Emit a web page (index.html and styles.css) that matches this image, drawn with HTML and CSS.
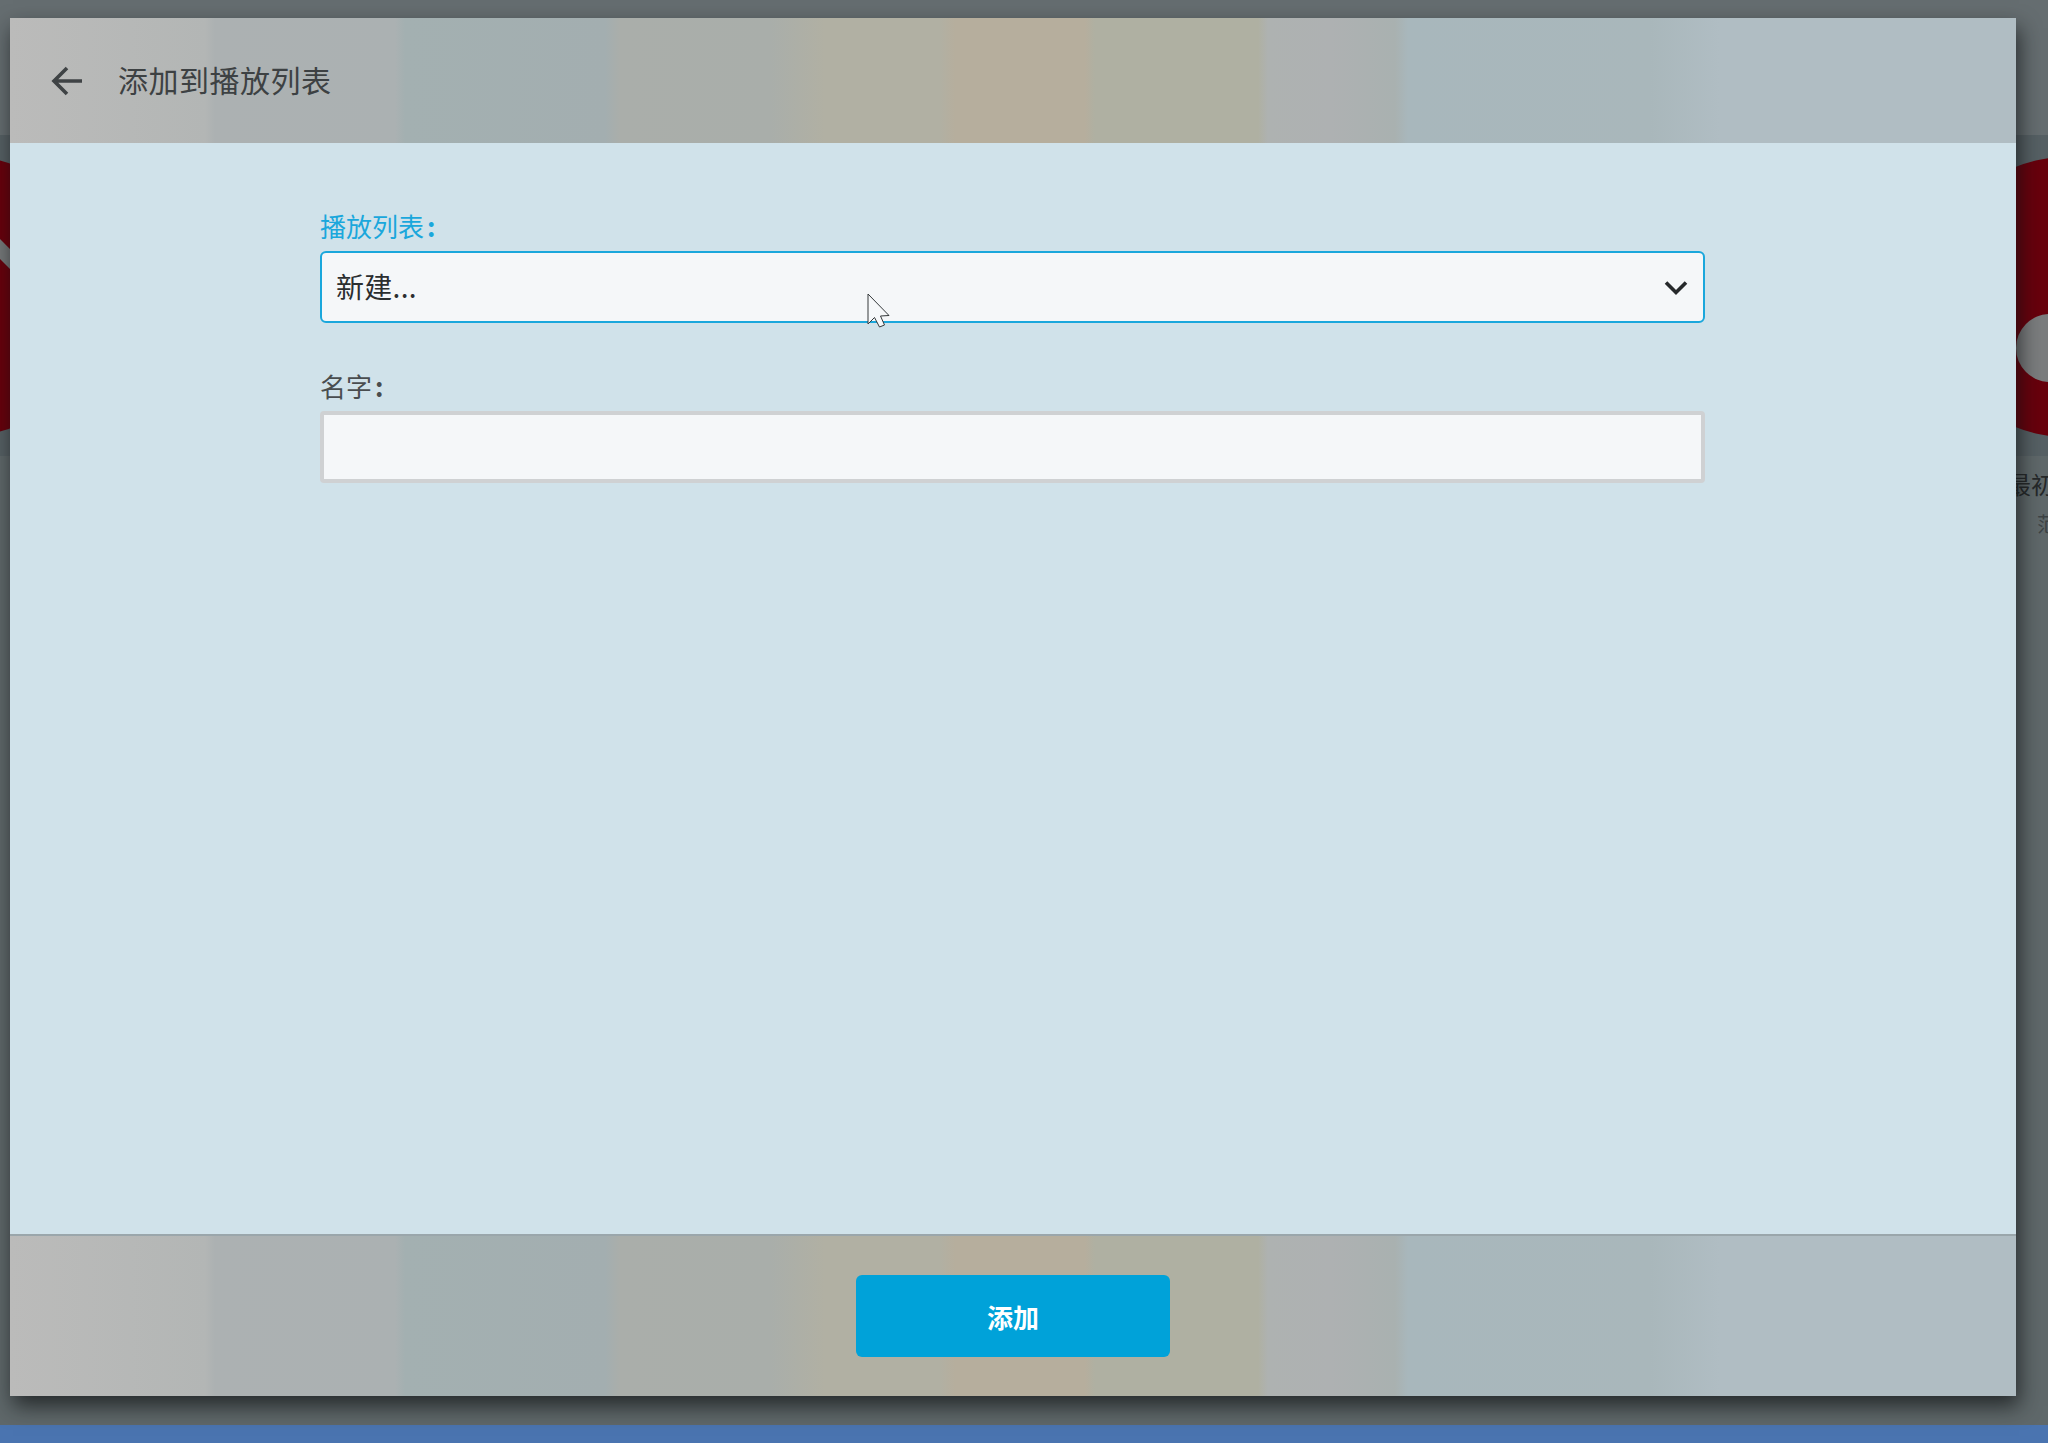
FILE: index.html
```html
<!DOCTYPE html>
<html lang="zh-CN">
<head>
<meta charset="utf-8">
<title>添加到播放列表</title>
<link rel="stylesheet" href="styles.css">
</head>
<body>
<div class="backdrop">
  <div class="top-band"></div>
  <div class="thumb-band"></div>
  <div class="disc disc-left"><span class="stripe"></span></div>
  <div class="disc disc-right"><span class="hole"></span></div>
  <div class="peek peek-title">最初</div>
  <div class="peek peek-sub">范</div>
  <div class="taskbar"></div>
</div>
<section class="dialog">
  <header class="dialog-head">
    <svg class="back" viewBox="0 0 32 30" width="32" height="30" aria-hidden="true"><path d="M31 15H3.500M16 2 3 15 16 28" fill="none" stroke="#3f4345" stroke-width="3.600"/></svg>
    <h1 class="dialog-title">添加到播放列表</h1>
  </header>
  <main class="dialog-body">
    <form class="form">
      <div class="field">
        <label class="label label-active">播放列表<span class="colon">:</span></label>
        <div class="select">
          <span class="select-value">新建...</span>
          <svg class="chev" viewBox="0 0 24 16" width="24" height="16" aria-hidden="true"><path d="M2 2.500 12 12.500 22 2.500" fill="none" stroke="#26292b" stroke-width="3.600"/></svg>
        </div>
      </div>
      <div class="field field-name">
        <label class="label">名字<span class="colon">:</span></label>
        <div class="input"></div>
      </div>
    </form>
  </main>
  <footer class="dialog-foot">
    <button class="add" type="button">添加</button>
  </footer>
</section>
<svg class="cursor" viewBox="0 0 24 36" width="24" height="36" aria-hidden="true"><path d="M1 1V31L7.500 24.500 12.500 34 17.500 32 13.500 23 22 22.500Z" fill="#f6f8fa" stroke="#34383a" stroke-width="1"/></svg>
</body>
</html>
```
FILE: styles.css
```css
* { box-sizing: border-box; }
html, body { margin: 0; height: 100%; }
body {
  position: relative;
  width: 2048px;
  height: 1443px;
  overflow: hidden;
  background: #5f686a;
  font-family: Roboto, "Noto Sans CJK SC", sans-serif;
  padding: 18px 32px 47px 10px;
  display: flex;
}
.backdrop { position: absolute; inset: 0; overflow: hidden; }
.top-band { position: absolute; left: 0; right: 0; top: 0; height: 135px; background: #656d70; }
.thumb-band { position: absolute; left: 0; right: 0; top: 135px; height: 321px; background: #566064; }
.disc { position: absolute; background: #68000c; border-radius: 50%; width: 280px; height: 280px; overflow: hidden; }
.disc-left { left: -175px; top: 156px; }
.disc-right { left: 1927px; top: 157px; }
.stripe { position: absolute; left: 150px; top: 91px; width: 60px; height: 14px; background: #757879; transform: rotate(45deg); }
.hole { position: absolute; left: 89px; top: 157px; width: 68px; height: 68px; border-radius: 50%; background: #7b7d7e; }
.peek { position: absolute; font-family: "Noto Sans CJK SC", sans-serif; white-space: nowrap; }
.peek-title { left: 2007px; top: 468px; font-size: 24px; line-height: 32px; color: #26292a; }
.peek-sub { left: 2037px; top: 510px; font-size: 20px; line-height: 28px; color: #3d4345; }
.taskbar { position: absolute; left: 0; right: 0; bottom: 0; height: 18px; background: #4a74b0; }
.dialog {
  position: relative;
  flex: 1;
  display: flex;
  flex-direction: column;
  box-shadow: 3px 10px 20px rgba(15, 18, 20, .72);
  background: linear-gradient(90deg,
    #bbbbba 0, #b3b6b5 195px, #acb1b2 205px, #abb1b2 385px, #a3b0b1 395px, #a3aeb0 595px,
    #aaaeaa 610px, #a9aeaa 760px, #b1b0a3 815px, #b1b0a3 930px, #b6ae9d 945px, #b6ae9d 1075px,
    #afb0a2 1085px, #afb0a2 1248px, #aeb2b1 1258px, #aeb1b2 1320px, #a9b1b0 1385px, #a8b7bc 1398px,
    #a9b7bb 1640px, #b0bdc3 1710px, #b0bdc3 100%);
}
.dialog-head {
  height: 125px;
  flex: none;
  display: flex;
  align-items: center;
  padding: 0 0 0 41px;
}
.back { flex: none; }
.dialog-title {
  margin: -3px 0 0 35px;
  font-family: "Noto Sans CJK SC", sans-serif;
  font-size: 30px;
  line-height: 40px;
  font-weight: 400;
  letter-spacing: .5px;
  color: #3d4143;
}
.dialog-body {
  flex: 1;
  background: #d0e2ea;
  padding: 66px 0 0 310px;
}
.form { width: 1385px; }
.field { display: flex; flex-direction: column; }
.field-name { margin-top: 46px; }
.label {
  font-family: "Noto Sans CJK SC", sans-serif;
  font-size: 26px;
  line-height: 34px;
  margin-bottom: 8px;
  color: #494d4f;
}
.label-active { color: #1aa7dc; }
.colon { margin-left: 3px; font-weight: 700; }
.select {
  height: 72px;
  border: 2.5px solid #1aa7dc;
  border-radius: 6px;
  background: #f5f7f9;
  display: flex;
  align-items: center;
  justify-content: space-between;
  padding: 0 14px;
  font-family: "Noto Sans CJK SC", sans-serif;
  font-size: 28px;
  color: #2b2e30;
}
.select-value { letter-spacing: .3px; margin-top: -2px; }
.chev { margin-top: 2px; margin-right: 1px; }
.input {
  height: 72px;
  border: 4px solid #cfd1d3;
  border-radius: 4px;
  background: #f5f7f9;
}
.dialog-foot {
  height: 162px;
  flex: none;
  border-top: 2px solid #9aa6ab;
  display: flex;
  justify-content: center;
  align-items: center;
}
.add {
  width: 314px;
  height: 82px;
  border: 0;
  border-radius: 6px;
  background: #00a2d9;
  color: #fff;
  font-family: "Noto Sans CJK SC", sans-serif;
  font-size: 26px;
  font-weight: 700;
}
.cursor { position: absolute; left: 867px; top: 293px; }
```
